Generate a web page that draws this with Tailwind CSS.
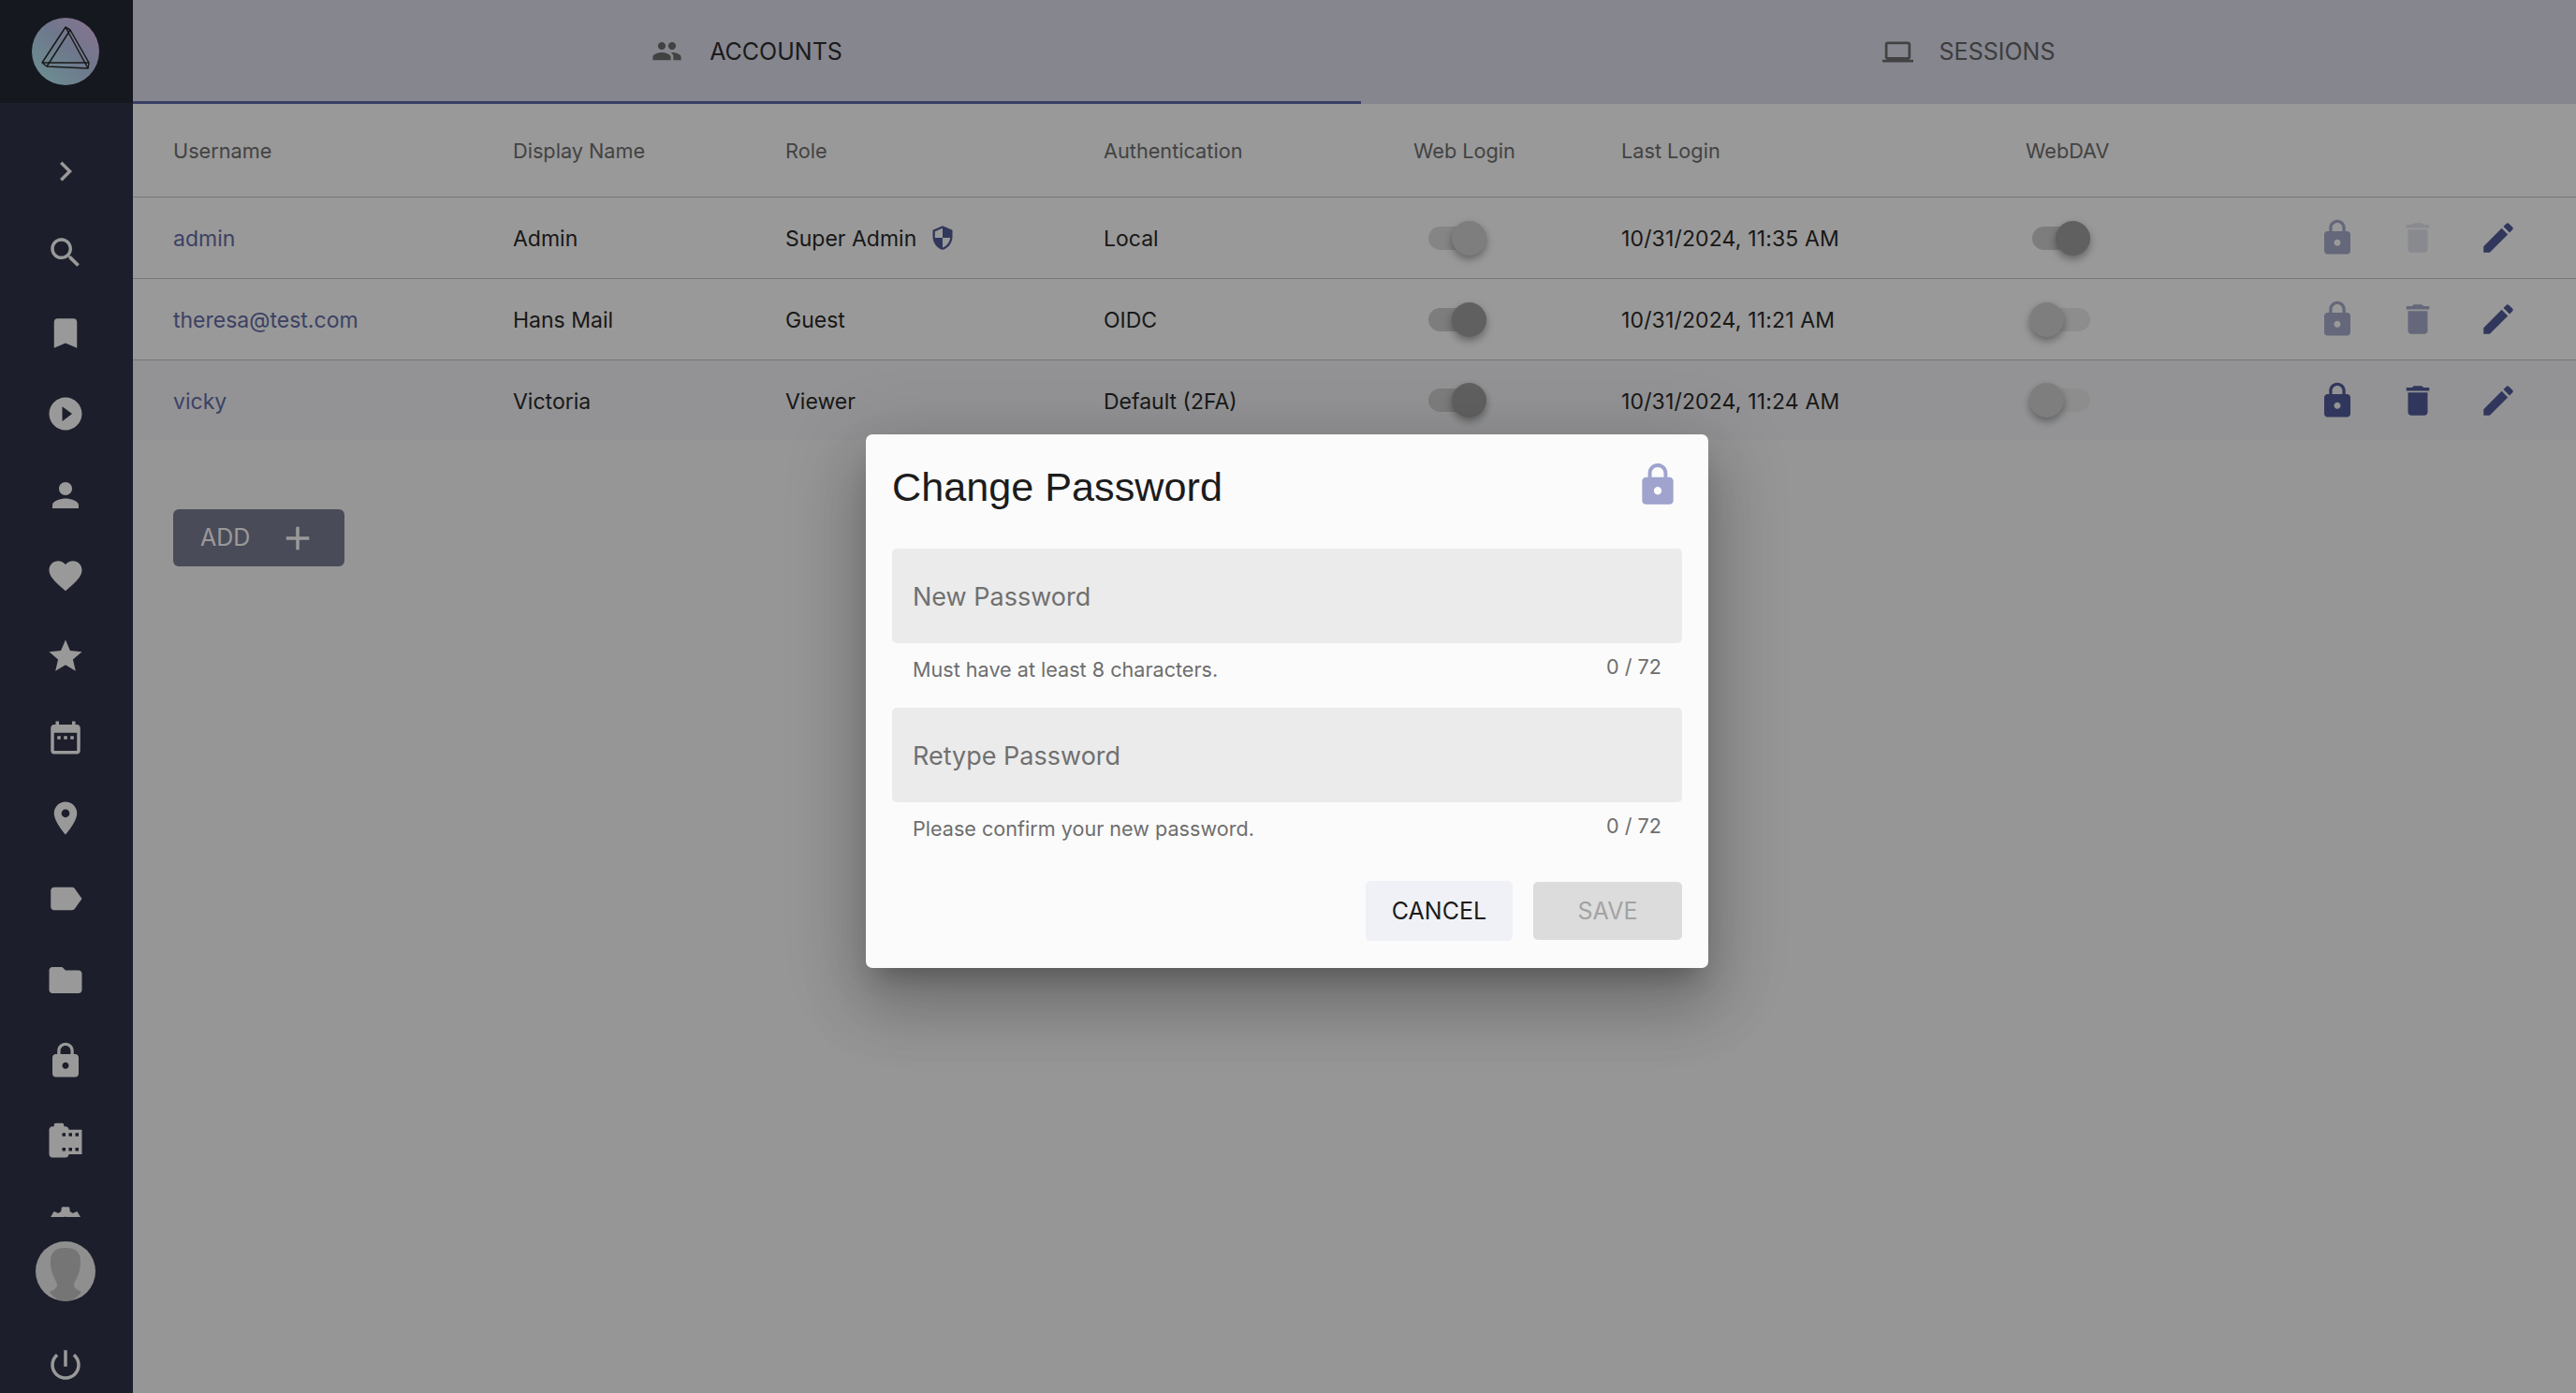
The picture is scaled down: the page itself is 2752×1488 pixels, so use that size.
<!DOCTYPE html>
<html lang="en">
<head>
  <meta charset="UTF-8">
  <title>Accounts</title>
  <script src="https://cdn.jsdelivr.net/npm/@tailwindcss/browser@4"></script>
</head>
<body class="bg-white font-['Inter',sans-serif] overflow-hidden">
  <svg class="hidden">
    <symbol id="i-lock" viewBox="0 0 24 24"><path fill="currentColor" d="M18 8h-1V6c0-2.76-2.24-5-5-5S7 3.24 7 6v2H6c-1.1 0-2 .9-2 2v10c0 1.1.9 2 2 2h12c1.1 0 2-.9 2-2V10c0-1.1-.9-2-2-2zm-6 9c-1.1 0-2-.9-2-2s.9-2 2-2 2 .9 2 2-.9 2-2 2zm3.1-9H8.9V6c0-1.71 1.39-3.1 3.1-3.1 1.71 0 3.1 1.39 3.1 3.1v2z"/></symbol>
    <symbol id="i-delete" viewBox="0 0 24 24"><path fill="currentColor" d="M6 19c0 1.1.9 2 2 2h8c1.1 0 2-.9 2-2V7H6v12zM19 4h-3.5l-1-1h-5l-1 1H5v2h14V4z"/></symbol>
    <symbol id="i-edit" viewBox="0 0 24 24"><path fill="currentColor" d="M3 17.25V21h3.75L17.81 9.94l-3.75-3.75L3 17.25zM20.71 7.04c.39-.39.39-1.02 0-1.41l-2.34-2.34c-.39-.39-1.02-.39-1.41 0l-1.83 1.83 3.75 3.75 1.83-1.83z"/></symbol>
  </svg>

  <div class="relative flex h-[1488px] w-[2752px]">
    <!-- Sidebar -->
    <aside class="flex w-[142px] shrink-0 flex-col items-center bg-[#303248] pr-[2px] text-white">
      <div class="-mr-[2px] flex h-[110px] w-[142px] items-center justify-center bg-[#262834] pr-[2px]">
        <svg class="size-[72px]" viewBox="0 0 72 72">
          <defs><linearGradient id="logo" x1="0" y1="1" x2="1" y2="0"><stop offset="0" stop-color="#b4f4f4"/><stop offset="0.55" stop-color="#b8c8ea"/><stop offset="1" stop-color="#ecc0f4"/></linearGradient></defs>
          <circle cx="36" cy="36" r="36" fill="url(#logo)"/>
          <g fill="none" stroke="#2a2a2a" stroke-width="1.5" stroke-linejoin="round">
            <path d="M36 10 L11 48 L16 52 L60 54 L61 48 L41 13 Z"/>
            <path d="M41 13 L16 52"/>
            <path d="M11 48 L61 48"/>
            <path d="M36 10 L60 54"/>
          </g>
        </svg>
      </div>
      <nav class="mt-[30px] h-[1160px] w-full overflow-hidden">
        <div class="flex h-[86.35px] items-center justify-center"><svg class="size-[42px]" viewBox="0 0 24 24" fill="currentColor"><path d="M10 6 8.59 7.41 13.17 12l-4.58 4.59L10 18l6-6z"/></svg></div>
        <div class="flex h-[86.35px] items-center justify-center"><svg class="size-[42px]" viewBox="0 0 24 24" fill="currentColor"><path d="M15.5 14h-.79l-.28-.27C15.41 12.59 16 11.11 16 9.5 16 5.91 13.09 3 9.5 3S3 5.91 3 9.5 5.91 16 9.5 16c1.61 0 3.09-.59 4.23-1.57l.27.28v.79l5 4.99L20.49 19l-4.99-5zm-6 0C7.01 14 5 11.99 5 9.5S7.01 5 9.5 5 14 7.01 14 9.5 11.99 14 9.5 14z"/></svg></div>
        <div class="flex h-[86.35px] items-center justify-center"><svg class="size-[42px]" viewBox="0 0 24 24" fill="currentColor"><path d="M17 3H7c-1.1 0-1.99.9-1.99 2L5 21l7-3 7 3V5c0-1.1-.9-2-2-2z"/></svg></div>
        <div class="flex h-[86.35px] items-center justify-center"><svg class="size-[42px]" viewBox="0 0 24 24" fill="currentColor"><path d="M12 2C6.48 2 2 6.48 2 12s4.48 10 10 10 10-4.48 10-10S17.52 2 12 2zm-2 14.5v-9l6 4.5-6 4.5z"/></svg></div>
        <div class="flex h-[86.35px] items-center justify-center"><svg class="size-[42px]" viewBox="0 0 24 24" fill="currentColor"><path d="M12 12c2.21 0 4-1.79 4-4s-1.79-4-4-4-4 1.79-4 4 1.79 4 4 4zm0 2c-2.67 0-8 1.34-8 4v2h16v-2c0-2.66-5.33-4-8-4z"/></svg></div>
        <div class="flex h-[86.35px] items-center justify-center"><svg class="size-[42px]" viewBox="0 0 24 24" fill="currentColor"><path d="M12 21.35l-1.45-1.32C5.4 15.36 2 12.28 2 8.5 2 5.42 4.42 3 7.5 3c1.74 0 3.41.81 4.5 2.09C13.09 3.81 14.76 3 16.5 3 19.58 3 22 5.42 22 8.5c0 3.78-3.4 6.86-8.55 11.54L12 21.35z"/></svg></div>
        <div class="flex h-[86.35px] items-center justify-center"><svg class="size-[42px]" viewBox="0 0 24 24" fill="currentColor"><path d="M12 17.27L18.18 21l-1.64-6.97L22 9.24l-7.19-.61L12 2 9.19 8.63 2 9.24l5.46 4.73L5.82 21z"/></svg></div>
        <div class="flex h-[86.35px] items-center justify-center"><svg class="size-[42px]" viewBox="0 0 24 24" fill="currentColor"><path d="M9 11H7v2h2v-2zm4 0h-2v2h2v-2zm4 0h-2v2h2v-2zm2-7h-1V2h-2v2H8V2H6v2H5c-1.11 0-1.99.9-1.99 2L3 20c0 1.1.89 2 2 2h14c1.1 0 2-.9 2-2V6c0-1.1-.9-2-2-2zm0 16H5V9h14v11z"/></svg></div>
        <div class="flex h-[86.35px] items-center justify-center"><svg class="size-[42px]" viewBox="0 0 24 24" fill="currentColor"><path d="M12 2C8.13 2 5 5.13 5 9c0 5.25 7 13 7 13s7-7.75 7-13c0-3.87-3.13-7-7-7zm0 9.5c-1.38 0-2.5-1.12-2.5-2.5s1.12-2.5 2.5-2.5 2.5 1.12 2.5 2.5-1.12 2.5-2.5 2.5z"/></svg></div>
        <div class="flex h-[86.35px] items-center justify-center"><svg class="size-[42px]" viewBox="0 0 24 24" fill="currentColor"><path d="M17.63 5.84C17.27 5.33 16.67 5 16 5L5 5.01C3.9 5.01 3 5.9 3 7v10c0 1.1.9 1.99 2 1.99L16 19c.67 0 1.27-.33 1.63-.84L22 12l-4.37-6.16z"/></svg></div>
        <div class="flex h-[86.35px] items-center justify-center"><svg class="size-[42px]" viewBox="0 0 24 24" fill="currentColor"><path d="M10 4H4c-1.1 0-1.99.9-1.99 2L2 18c0 1.1.9 2 2 2h16c1.1 0 2-.9 2-2V8c0-1.1-.9-2-2-2h-8l-2-2z"/></svg></div>
        <div class="flex h-[86.35px] items-center justify-center"><svg class="size-[42px]"><use href="#i-lock"/></svg></div>
        <div class="flex h-[86.35px] items-center justify-center"><svg class="size-[42px]" viewBox="0 0 24 24" fill="currentColor"><path d="M14 5c0-1.1-.9-2-2-2h-1V2c0-.55-.45-1-1-1H6c-.55 0-1 .45-1 1v1H4c-1.1 0-2 .9-2 2v15c0 1.1.9 2 2 2h8c1.1 0 2-.9 2-2h8V5h-8zm-2 13h-2v-2h2v2zm0-9h-2V7h2v2zm4 9h-2v-2h2v2zm0-9h-2V7h2v2zm4 9h-2v-2h2v2zm0-9h-2V7h2v2z"/></svg></div>
        <div class="flex h-[86.35px] items-center justify-center"><svg class="size-[42px]" viewBox="0 0 24 24" fill="currentColor"><path d="M19.14 12.94c.04-.3.06-.61.06-.94 0-.32-.02-.64-.07-.94l2.03-1.58c.18-.14.23-.41.12-.61l-1.92-3.32c-.12-.22-.37-.29-.59-.22l-2.39.96c-.5-.38-1.03-.7-1.62-.94l-.36-2.54c-.04-.24-.24-.41-.48-.41h-3.84c-.24 0-.43.17-.47.41l-.36 2.54c-.59.24-1.13.57-1.62.94l-2.39-.96c-.22-.08-.47 0-.59.22L2.74 8.87c-.12.21-.08.47.12.61l2.03 1.58c-.05.3-.09.63-.09.94s.02.64.07.94l-2.03 1.58c-.18.14-.23.41-.12.61l1.92 3.32c.12.22.37.29.59.22l2.39-.96c.5.38 1.03.7 1.62.94l.36 2.54c.05.24.24.41.48.41h3.84c.24 0 .44-.17.47-.41l.36-2.54c.59-.24 1.13-.56 1.62-.94l2.39.96c.22.08.47 0 .59-.22l1.92-3.32c.12-.22.07-.47-.12-.61l-2.01-1.58zM12 15.6c-1.98 0-3.6-1.62-3.6-3.6s1.62-3.6 3.6-3.6 3.6 1.62 3.6 3.6-1.62 3.6-3.6 3.6z"/></svg></div>
      </nav>
      <div class="mt-[26px] size-[64px] overflow-hidden rounded-full bg-[#eeeeee]">
        <svg viewBox="0 0 64 64" class="size-full"><path fill="#c4c4c4" d="M31 7c-9 0-15 4-15 14 0 7 1 13 4 18 1 3 3 5 3 8 0 3-4 5-8 7 4 6 10 10 17 10s13-4 17-10c-4-2-8-4-8-7 0-3 2-5 3-8 3-5 4-11 4-18 0-10-6-14-15-14z"/></svg>
      </div>
      <svg class="mt-[47px] size-[42px]" viewBox="0 0 24 24" fill="currentColor"><path d="M13 3h-2v10h2V3zm4.83 2.17l-1.42 1.42C17.99 7.86 19 9.81 19 12c0 3.87-3.13 7-7 7s-7-3.13-7-7c0-2.19 1.01-4.14 2.58-5.42L6.17 5.17C4.23 6.82 3 9.26 3 12c0 4.97 4.03 9 9 9s9-4.03 9-9c0-2.74-1.23-5.18-3.17-6.83z"/></svg>
    </aside>

    <!-- Main -->
    <main class="min-w-0 flex-1 bg-[#fafafa]">
      <div class="flex h-[111px] bg-[#e0e0ee]">
        <div class="flex w-[1312px] items-center justify-center gap-[29px] border-b-[3px] border-[#616aa8] text-[#2e2e2e]">
          <svg class="size-[33px] text-[#6e6e6e]" viewBox="0 0 24 24" fill="currentColor"><path d="M16 11c1.66 0 2.99-1.34 2.99-3S17.66 5 16 5c-1.66 0-3 1.34-3 3s1.34 3 3 3zm-8 0c1.66 0 2.99-1.34 2.99-3S9.66 5 8 5C6.34 5 5 6.34 5 8s1.34 3 3 3zm0 2c-2.33 0-7 1.17-7 3.5V19h14v-2.5c0-2.33-4.67-3.5-7-3.5zm8 0c-.29 0-.62.02-.97.05 1.16.84 1.97 1.97 1.97 3.45V19h6v-2.5c0-2.33-4.67-3.5-7-3.5z"/></svg>
          <span class="pt-[3px] text-[25px]">ACCOUNTS</span>
        </div>
        <div class="flex flex-1 items-center justify-center gap-[28px] text-[#666]">
          <svg class="size-[33px] text-[#6e6e6e]" viewBox="0 0 24 24" fill="currentColor"><path d="M20 18c1.1 0 1.99-.9 1.99-2L22 6c0-1.1-.9-2-2-2H4c-1.1 0-2 .9-2 2v10c0 1.1.9 2 2 2H0v2h24v-2h-4zM4 6h16v10H4V6z"/></svg>
          <span class="text-[25px]">SESSIONS</span>
        </div>
      </div>

      <!-- Table -->
      <div class="bg-white text-[23px] text-[#2a2a2a]">
        <div class="grid h-[100px] grid-cols-[363px_291px_340px_331px_222px_432px_1fr] items-center border-b border-[#c8c8c8] pl-[43px] pt-[2px] text-[21.7px] text-[#707070]">
          <div>Username</div><div>Display Name</div><div>Role</div><div>Authentication</div><div>Web Login</div><div>Last Login</div><div>WebDAV</div>
        </div>

        <div class="grid h-[87px] grid-cols-[363px_291px_340px_331px_222px_432px_1fr] items-center border-b border-[#c8c8c8] pl-[43px]">
          <div class="pt-[3px] text-[#666da8]">admin</div>
          <div class="pt-[3px]">Admin</div>
          <div class="flex items-center gap-[14px]"><span class="pt-[3px]">Super Admin</span> <svg class="size-[28px] text-[#545d99]" viewBox="0 0 24 24" fill="currentColor"><path d="M12 1L3 5v6c0 5.55 3.84 10.74 9 12 5.16-1.26 9-6.45 9-12V5l-9-4zm0 10.99h7c-.53 4.12-3.28 7.79-7 8.94V12H5V6.3l7-3.11v8.8z"/></svg></div>
          <div class="pt-[3px]">Local</div>
          <div class="relative ml-[16px] h-[25px] w-[62px] rounded-full bg-[#dedede]"><span class="absolute -top-[6px] right-0 size-[37px] rounded-full bg-[#d2d2d2] shadow-[0_4px_8px_rgba(0,0,0,.35)]"></span></div>
          <div class="pt-[3px] tracking-[0.15px]">10/31/2024, 11:35 AM</div>
          <div class="flex items-center">
            <div class="relative ml-[7px] h-[25px] w-[62px] rounded-full bg-[#d0d0d0]"><span class="absolute -top-[6px] right-0 size-[37px] rounded-full bg-[#a0a0a0] shadow-[0_4px_8px_rgba(0,0,0,.35)]"></span></div>
            <div class="ml-auto flex pr-[62px] text-[#535c99]">
              <svg class="size-[42px] opacity-50"><use href="#i-lock"/></svg>
              <svg class="ml-[44px] size-[42px] opacity-15"><use href="#i-delete"/></svg>
              <svg class="ml-[44px] size-[42px]"><use href="#i-edit"/></svg>
            </div>
          </div>
        </div>

        <div class="grid h-[87px] grid-cols-[363px_291px_340px_331px_222px_432px_1fr] items-center border-b border-[#c8c8c8] pl-[43px]">
          <div class="pt-[3px] text-[#666da8]">theresa@test.com</div>
          <div class="pt-[3px]">Hans Mail</div>
          <div class="pt-[3px]">Guest</div>
          <div class="pt-[3px]">OIDC</div>
          <div class="relative ml-[16px] h-[25px] w-[62px] rounded-full bg-[#d0d0d0]"><span class="absolute -top-[6px] right-0 size-[37px] rounded-full bg-[#a0a0a0] shadow-[0_4px_8px_rgba(0,0,0,.35)]"></span></div>
          <div class="pt-[3px] tracking-[0.15px]">10/31/2024, 11:21 AM</div>
          <div class="flex items-center">
            <div class="relative ml-[7px] h-[25px] w-[62px] rounded-full bg-[#ececec]"><span class="absolute -top-[6px] -left-[3px] size-[37px] rounded-full bg-[#d2d2d2] shadow-[0_4px_8px_rgba(0,0,0,.35)]"></span></div>
            <div class="ml-auto flex pr-[62px] text-[#535c99]">
              <svg class="size-[42px] opacity-50"><use href="#i-lock"/></svg>
              <svg class="ml-[44px] size-[42px] opacity-50"><use href="#i-delete"/></svg>
              <svg class="ml-[44px] size-[42px]"><use href="#i-edit"/></svg>
            </div>
          </div>
        </div>

        <div class="grid h-[85px] grid-cols-[363px_291px_340px_331px_222px_432px_1fr] items-center bg-[#f5f6f8] pl-[43px]">
          <div class="pt-[3px] text-[#666da8]">vicky</div>
          <div class="pt-[3px]">Victoria</div>
          <div class="pt-[3px]">Viewer</div>
          <div class="pt-[3px]">Default (2FA)</div>
          <div class="relative ml-[16px] h-[25px] w-[62px] rounded-full bg-[#d0d0d0]"><span class="absolute -top-[6px] right-0 size-[37px] rounded-full bg-[#a0a0a0] shadow-[0_4px_8px_rgba(0,0,0,.35)]"></span></div>
          <div class="pt-[3px] tracking-[0.15px]">10/31/2024, 11:24 AM</div>
          <div class="flex items-center">
            <div class="relative ml-[7px] h-[25px] w-[62px] rounded-full bg-[#ececec]"><span class="absolute -top-[6px] -left-[3px] size-[37px] rounded-full bg-[#d2d2d2] shadow-[0_4px_8px_rgba(0,0,0,.35)]"></span></div>
            <div class="ml-auto flex pr-[62px] text-[#535c99]">
              <svg class="size-[42px]"><use href="#i-lock"/></svg>
              <svg class="ml-[44px] size-[42px]"><use href="#i-delete"/></svg>
              <svg class="ml-[44px] size-[42px]"><use href="#i-edit"/></svg>
            </div>
          </div>
        </div>
      </div>

      <button class="ml-[43px] mt-[74px] flex h-[61px] w-[183px] items-center rounded-[6px] bg-[#7c7d95] pl-[29px] text-[25px] text-white">
        ADD
        <svg class="ml-[30px] size-[42px]" viewBox="0 0 24 24" fill="currentColor"><path d="M19 13h-6v6h-2v-6H5v-2h6V5h2v6h6v2z"/></svg>
      </button>
    </main>

    <!-- Dialog -->
    <div class="absolute inset-0 flex justify-center bg-black/40 pr-[2px] pt-[464px]">
      <div class="h-[570px] w-[900px] rounded-[7px] bg-[#fbfbfb] px-[28px] shadow-[0_19px_26px_-12px_rgba(0,0,0,.24),0_42px_66px_5px_rgba(0,0,0,.16),0_16px_80px_14px_rgba(0,0,0,.13)]">
        <div class="flex h-[122px] items-start justify-between pt-[31px]">
          <h2 class="font-['Liberation_Sans',sans-serif] text-[43.2px] leading-[50px] text-[#1c1c1c]">Change Password</h2>
          <svg class="mr-[1px] -mt-[2px] size-[50px] text-[#9fa3cd]"><use href="#i-lock"/></svg>
        </div>

        <div class="flex h-[101px] items-center rounded-[5px] bg-[#ebebeb] px-[22px] pt-[3px] text-[27px] text-[#707070]">New Password</div>
        <div class="flex h-[69px] justify-between px-[22px] pt-[12px] text-[21.6px] text-[#6e6e6e]"><span>Must have at least 8 characters.</span><span class="-mt-[3px]">0 / 72</span></div>

        <div class="flex h-[101px] items-center rounded-[5px] bg-[#ebebeb] px-[22px] pt-[3px] text-[27px] text-[#707070]">Retype Password</div>
        <div class="flex h-[84px] justify-between px-[22px] pt-[12px] text-[21.6px] text-[#6e6e6e]"><span>Please confirm your new password.</span><span class="-mt-[3px]">0 / 72</span></div>

        <div class="flex items-center justify-end gap-[22px]">
          <button class="h-[64px] w-[157px] rounded-[5px] bg-[#f0f1f6] pt-[2px] text-[25px] text-[#1c1c1c]">CANCEL</button>
          <button class="h-[62px] w-[159px] rounded-[5px] bg-[#dcdcdc] pt-[2px] text-[25px] text-[#a3a3a3]">SAVE</button>
        </div>
      </div>
    </div>
  </div>
</body>
</html>
